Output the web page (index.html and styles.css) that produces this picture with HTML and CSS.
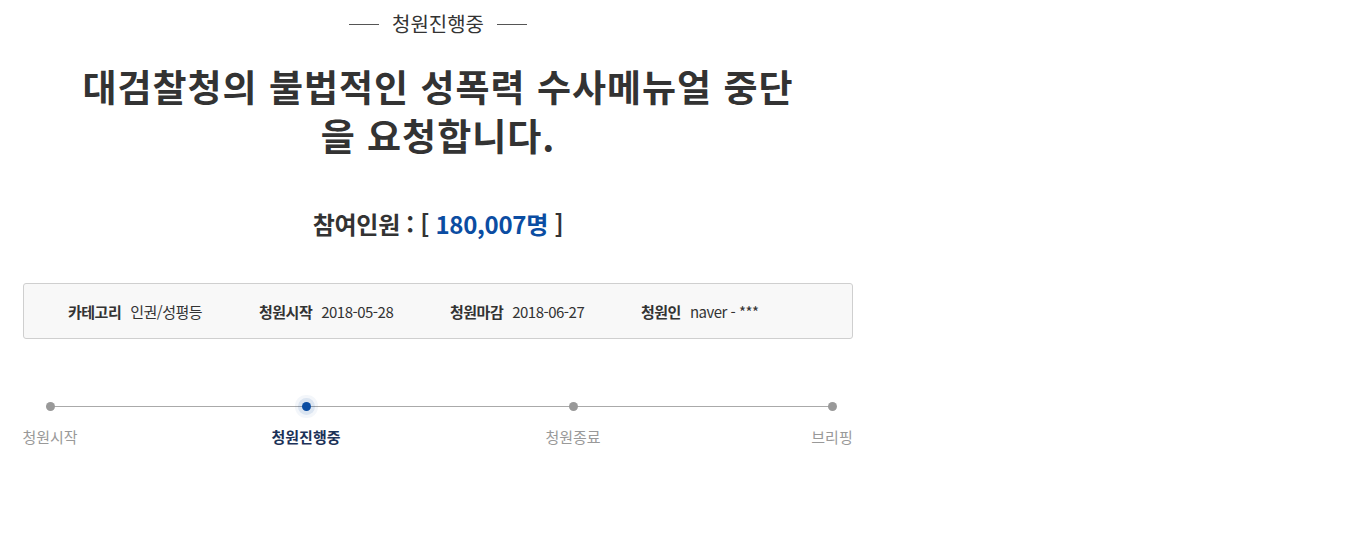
FILE: index.html
```html
<!DOCTYPE html>
<html lang="ko">
<head>
    <meta charset="UTF-8">
    <meta name="viewport" content="width=device-width, initial-scale=1.0">
    <title>청원진행중</title>
    <link rel="stylesheet" href="styles.css">
</head>
<body>
    <div class="petition">
        <div class="status"><span>청원진행중</span></div>
        <h1 class="title">대검찰청의 불법적인 성폭력 수사메뉴얼 중단을 요청합니다.</h1>
        <h2 class="count">참여인원 : [ <span>180,007명</span> ]</h2>

        <ul class="meta">
            <li><strong>카테고리</strong>인권/성평등</li>
            <li><strong>청원시작</strong>2018-05-28</li>
            <li><strong>청원마감</strong>2018-06-27</li>
            <li><strong>청원인</strong>naver - ***</li>
        </ul>

        <ol class="steps">
            <li class="step step-1"><i></i><span>청원시작</span></li>
            <li class="step step-2 on"><i></i><span>청원진행중</span></li>
            <li class="step step-3"><i></i><span>청원종료</span></li>
            <li class="step step-4"><i></i><span>브리핑</span></li>
        </ol>
    </div>
</body>
</html>
```
FILE: styles.css
```css
body {
    margin: 0;
    padding: 0;
    background: #fff;
    color: #333;
    font-family: "Noto Sans CJK KR", "Noto Sans", sans-serif;
}
.petition {
    width: 830px;
    margin-left: 23px;
    padding-top: 8px;
}
.status {
    display: flex;
    justify-content: center;
    align-items: center;
    gap: 13px;
    font-size: 20px;
    line-height: 32px;
    color: #333;
}
.status::before,
.status::after {
    content: '';
    width: 30px;
    height: 1px;
    background: #555;
}
.title {
    width: 724px;
    margin: 22px auto 0;
    font-size: 37px;
    line-height: 49px;
    font-weight: 700;
    text-align: center;
    color: #333;
    letter-spacing: 1px;
}
.count {
    margin: 48px 0 0;
    font-size: 24px;
    line-height: 32px;
    font-weight: 700;
    text-align: center;
    color: #333;
    letter-spacing: -0.3px;
}
.count span {
    color: #0b4da2;
}
.meta {
    list-style: none;
    margin: 43px 0 0;
    padding: 0 0 0 44px;
    height: 54px;
    display: flex;
    align-items: center;
    border: 1px solid #cfcfcf;
    border-radius: 3px;
    background: #f8f8f8;
    font-size: 15px;
    color: #333;
}
.meta li {
    width: 191px;
    white-space: nowrap;
    letter-spacing: -0.5px;
}
.meta strong {
    margin-right: 9px;
    font-weight: 700;
}
.steps {
    list-style: none;
    position: relative;
    margin: 57px 0 0;
    padding: 0;
    display: flex;
}
.steps::before {
    content: '';
    position: absolute;
    top: 10px;
    left: 27px;
    right: 21px;
    height: 1px;
    background: #aaa;
}
.step {
    display: flex;
    flex-direction: column;
    align-items: center;
    font-size: 15px;
    color: #999;
}
.step-1 { width: 54px; }
.step-2 { width: 68px; margin-left: 195px; }
.step-3 { width: 68px; margin-left: 199px; }
.step-4 { width: 42px; margin-left: auto; }
.step i {
    position: relative;
    width: 9px;
    height: 9px;
    margin-top: 6px;
    border-radius: 50%;
    background: #999;
}
.step span {
    margin-top: 15px;
    white-space: nowrap;
}
.step.on i {
    background: #0b4da2;
    box-shadow: 0 0 0 4px rgba(11, 77, 162, 0.1), 0 0 0 7px rgba(11, 77, 162, 0.05);
}
.step.on span {
    color: #1c3258;
    font-weight: 700;
}
```
